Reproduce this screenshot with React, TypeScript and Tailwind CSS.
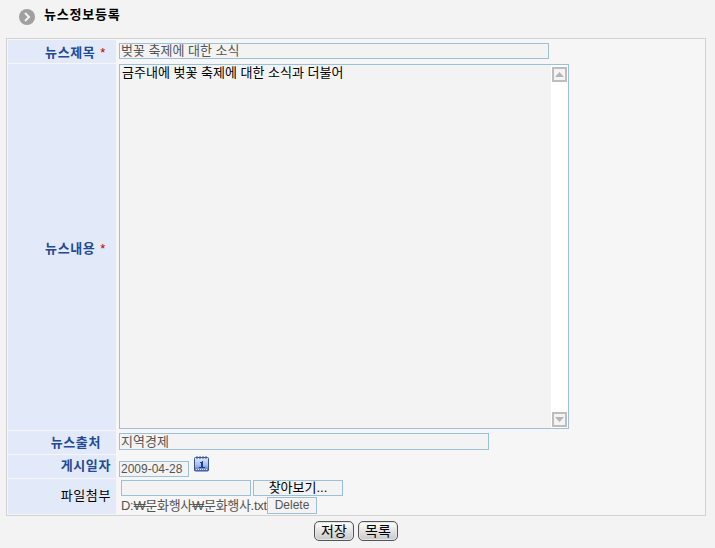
import React, { FC, ReactNode } from 'react';

const FONT = 'font-["Liberation_Sans","Noto_Sans_CJK_KR",sans-serif]';

const Label: FC<{ children: ReactNode; pr: string; plain?: boolean; h: string; star?: boolean; shift?: string }> = ({ children, pr, plain, h, star, shift }) => (
    <div className={`${h} ${pr} ${shift ?? ''} w-[108px] shrink-0 bg-[#e2e9f8] flex items-center justify-end text-[13px] tracking-[0.6px] ${plain ? 'font-normal text-black' : 'font-bold text-[#234a94]'}`}>
        {children}
        {star && <span className="ml-[5px] font-normal text-[#c00000]">*</span>}
    </div>
);

const CalendarIcon: FC = () => (
    <svg width="16" height="16" viewBox="0 0 16 16" className="shrink-0">
        <defs>
            <linearGradient id="cal" x1="0" y1="0" x2="0" y2="1">
                <stop offset="0" stopColor="#dfe8fa" />
                <stop offset="0.55" stopColor="#a9c0ec" />
                <stop offset="1" stopColor="#4a6fc4" />
            </linearGradient>
        </defs>
        <rect x="0.5" y="1.5" width="14" height="13.5" rx="1" fill="url(#cal)" stroke="#34558f" />
        <path d="M3 0v3M6 0v3M9 0v3M12 0v3" stroke="#45628f" />
        <path d="M6 6h2V5h1v6h2v1H5v-1h2V7H6z" fill="#1d3f8f" />
        <path d="M2 13.5h11" stroke="#dce6fa" strokeDasharray="1 1" />
    </svg>
);

const ScrollArrow: FC<{ down?: boolean }> = ({ down }) => (
    <div className="w-[15px] h-[15px] border-2 border-[#bdbdbd] bg-[#f4f4f4] flex items-center justify-center">
        <svg width="9" height="5" viewBox="0 0 9 5" className={down ? 'rotate-180' : ''}>
            <path d="M4.5 0L9 5H0z" fill="#b5b5b5" />
        </svg>
    </div>
);

const RoundButton: FC<{ children: ReactNode }> = ({ children }) => (
    <button className="w-10 h-[20px] rounded-[5px] border border-[#555] bg-gradient-to-b from-white to-[#c8c8c8] text-[14px] text-black leading-none shadow-[inset_0_0_0_1px_#e4e4e4]">
        {children}
    </button>
);

const App: FC = () => {
    return (
        <div className={`w-[715px] h-[548px] bg-[#f3f3f3] overflow-hidden ${FONT}`}>
            {/* Page title */}
            <div className="h-[38px] pl-[19px] pt-[8px] flex items-start gap-[9px]">
                <div className="w-4 h-4 mt-[1px] rounded-full bg-[#a0a0a0] flex items-center justify-center">
                    <svg width="8" height="10" viewBox="0 0 8 10">
                        <path d="M2 1l4 4-4 4" fill="none" stroke="#f4f4f4" strokeWidth="2" />
                    </svg>
                </div>
                <span className="text-[13px] leading-[14px] font-bold tracking-[0.8px] text-black">뉴스정보등록</span>
            </div>

            {/* Form */}
            <div className="ml-[6px] w-[700px] h-[478px] border border-[#d2d2d2] bg-[#f6f6f6] p-[1px] flex flex-col gap-[1px]">
                <div className="flex">
                    <Label h="h-[23px]" pr="pr-[10px]" shift="pt-[3px]" star>뉴스제목</Label>
                    <div className="pl-[3px] pt-[3px]">
                        <div className="w-[430px] h-[16px] border border-[#9cc0d6] bg-[#f3f3f3] pl-[1px] text-[13px] leading-[14px] text-[#555]">
                            벚꽃 축제에 대한 소식
                        </div>
                    </div>
                </div>
                <div className="flex">
                    <Label h="h-[366px]" pr="pr-[10px]" shift="pt-[3px]" star>뉴스내용</Label>
                    <div className="pl-[3px]">
                        <div className="w-[450px] h-[365px] border border-[#9cc0d6] bg-[#f3f3f3] flex justify-between">
                            <div className="pl-[2px] pt-[1px] text-[13px] leading-[14px] text-black">금주내에 벚꽃 축제에 대한 소식과 더불어</div>
                            <div className="w-[17px] bg-white pt-[2px] pb-[1px] flex flex-col items-center justify-between">
                                <ScrollArrow />
                                <ScrollArrow down />
                            </div>
                        </div>
                    </div>
                </div>
                <div className="flex">
                    <Label h="h-[23px]" pr="pr-[15px]">뉴스출처</Label>
                    <div className="pl-[3px] pt-[2px]">
                        <div className="w-[370px] h-[17px] border border-[#9cc0d6] bg-[#f3f3f3] pl-[1px] text-[13px] leading-[15px] text-[#555]">
                            지역경제
                        </div>
                    </div>
                </div>
                <div className="flex">
                    <Label h="h-[23px]" pr="pr-[5px]" shift="pb-[2px]">게시일자</Label>
                    <div className="pl-[3px] flex items-start gap-[5px]">
                        <div className="mt-[6px] w-[70px] h-[16px] border border-[#9cc0d6] bg-[#f3f3f3] pl-[1px] text-[12px] leading-[15px] text-[#555]">
                            2009-04-28
                        </div>
                        <div className="mt-[1px]">
                            <CalendarIcon />
                        </div>
                    </div>
                </div>
                <div className="flex">
                    <Label h="h-[35px]" pr="pr-[5px]" shift="pb-[2px]" plain>파일첨부</Label>
                    <div className="pl-[3px] pt-[1px] flex flex-col">
                        <div className="pl-[2px] flex gap-[2px]">
                            <div className="w-[130px] h-[16px] border border-[#9cc0d6] bg-[#f3f3f3]" />
                            <div className="w-[90px] h-[16px] border border-[#9cc0d6] bg-[#f3f3f3] text-center text-[13px] leading-[14px] text-black">
                                찾아보기...
                            </div>
                        </div>
                        <div className="mt-[1px] flex items-center h-[17px] text-[12px] text-[#555]">
                            <span className="w-[148px] pl-[2px] whitespace-nowrap text-[13px] tracking-[-0.3px]">D:₩문화행사₩문화행사.txt</span>
                            <div className="w-[50px] h-[17px] border border-[#9cc0d6] bg-[#f3f3f3] text-center leading-[15px]">Delete</div>
                        </div>
                    </div>
                </div>
            </div>

            {/* Actions */}
            <div className="pt-[5px] pl-[314px] flex gap-[4px]">
                <RoundButton>저장</RoundButton>
                <RoundButton>목록</RoundButton>
            </div>
        </div>
    );
};

export default App;
